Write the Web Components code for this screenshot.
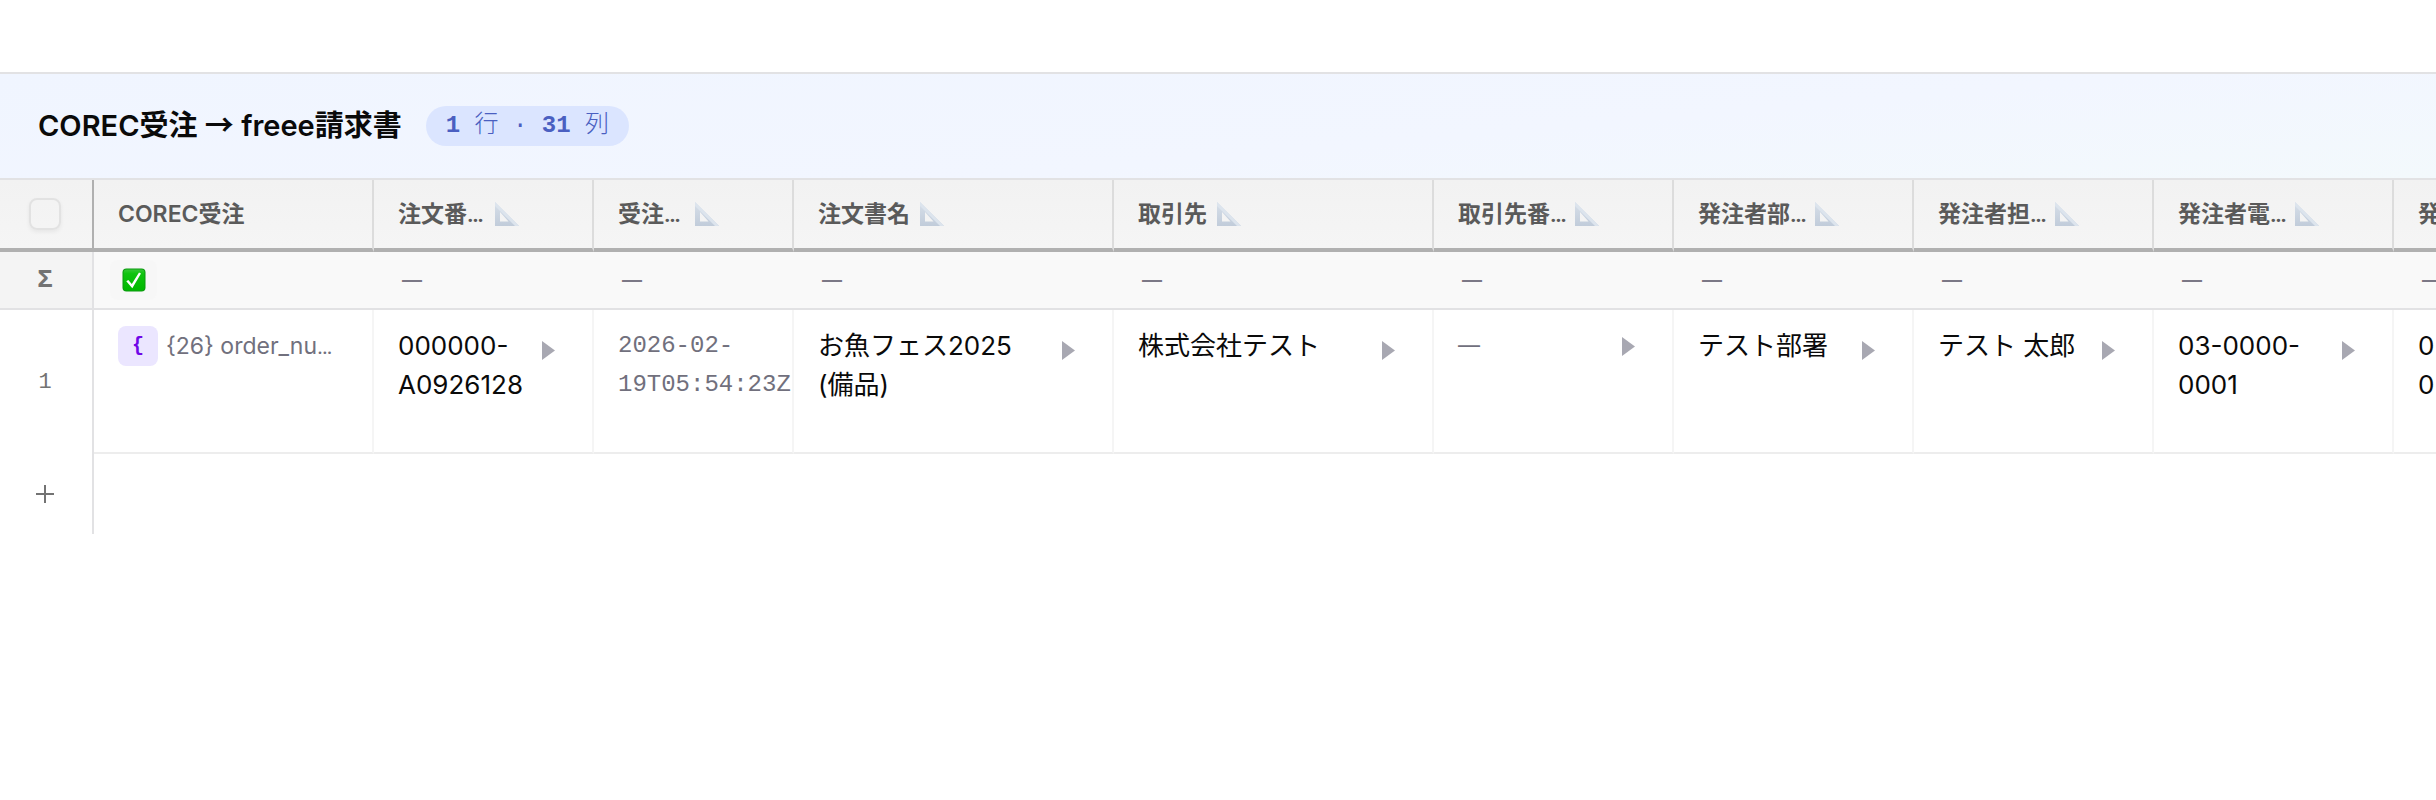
<!DOCTYPE html>
<html lang="ja">
<head>
<meta charset="UTF-8">
<meta name="viewport" content="width=device-width, initial-scale=1">
<title>COREC受注 → freee請求書</title>
<style>
  :root {
    --sans: Inter, 'Noto Sans CJK JP', sans-serif;
    --mono: 'Liberation Mono', 'Noto Sans CJK JP', monospace;
    --text: #0a0a0a;
    --muted: #71707d;
    --line: #e2e2e4;
    --line-strong: #b0b0b0;
  }
  body {
    margin: 0;
    background: #fff;
    color: var(--text);
    font-family: var(--sans);
    font-size: 26px;
    line-height: 39px;
    overflow-x: hidden;
  }
  .arrow {
    font-family: 'Noto Sans CJK JP', sans-serif;
    line-height: 1;
  }
  count-badge b { font-weight: 700; }
</style>
</head>
<body>
<sheet-page>
  <sheet-header>
    COREC受注 <span class="arrow">→</span> freee請求書
    <count-badge slot="badge"><b>1</b> 行 · <b>31</b> 列</count-badge>
  </sheet-header>
  <data-sheet></data-sheet>
</sheet-page>

<script>
// 共通: open な shadow root に markup を流し込む
class BaseElement extends HTMLElement {
  constructor() {
    super();
    this.attachShadow({ mode: 'open' });
  }

  connectedCallback() {
    this.shadowRoot.innerHTML = `<style>${this.styles}</style>${this.markup}`;
  }
}

class SheetPage extends BaseElement {
  get styles() {
    return `
      :host { display: block; padding-top: 72px; }
    `;
  }

  get markup() {
    return `<slot></slot>`;
  }
}

class SheetHeader extends BaseElement {
  get styles() {
    return `
      :host {
        display: flex;
        align-items: center;
        gap: 24px;
        padding: 32px 38px;
        border-top: 2px solid var(--line);
        border-bottom: 2px solid var(--line);
        background: linear-gradient(175deg, #f0f5ff 0%, #f2f6ff 60%, #f3f9fc 100%);
      }
      h2 {
        margin: 0;
        font-size: 29px;
        line-height: 40px;
        font-weight: 600;
        white-space: nowrap;
      }
    `;
  }

  get markup() {
    return `<h2><slot></slot></h2><slot name="badge"></slot>`;
  }
}

class CountBadge extends BaseElement {
  get styles() {
    return `
      :host {
        display: block;
        padding: 0 20px;
        border-radius: 20px;
        background: #dbe5ff;
        color: #4a5fc1;
        font-family: var(--mono);
        font-size: 24px;
        line-height: 40px;
        font-weight: 300;
        white-space: nowrap;
      }
    `;
  }

  get markup() {
    return `<slot></slot>`;
  }
}

// 列見出し (三角定規アイコン付き)
class ColumnHead extends BaseElement {
  get styles() {
    return `
      :host { display: flex; align-items: center; gap: 10px; }
      .label { white-space: nowrap; }
      :host([cut]) .label { flex: 1; min-width: 0; }
      :host([cut]) { padding-right: 49px; }
      svg { display: block; flex: none; width: 24px; height: 24px; }
    `;
  }

  get markup() {
    const icon = this.hasAttribute('plain') ? '' : `
      <svg viewBox="0 0 24 24" aria-hidden="true">
        <defs>
          <linearGradient id="ruler" x1="0" y1="0" x2="0" y2="1">
            <stop offset="0" stop-color="#d7dfe9"/>
            <stop offset="1" stop-color="#c1ccda"/>
          </linearGradient>
        </defs>
        <path fill="url(#ruler)" fill-rule="evenodd" d="M0 0L24 24H0zM5 10V19.500H13.500z"/>
        <path fill="#dce4ed" d="M0 0L24 24H20L0 4z"/>
      </svg>`;
    return `<span class="label"><slot></slot></span>${icon}`;
  }
}

// 値セル: テキスト + 展開ボタン
class ValueCell extends BaseElement {
  get styles() {
    return `
      :host { display: flex; align-items: flex-start; }
      .text { flex: 1; min-width: 0; overflow-wrap: break-word; }
      :host([empty]) .text { color: var(--muted); font-size: 22px; }
      :host([date]) .text {
        color: var(--muted);
        font-family: var(--mono);
        font-size: 24px;
        overflow-wrap: normal;
      }
      button {
        flex: none;
        display: flex;
        align-items: center;
        justify-content: center;
        width: 40px;
        height: 40px;
        margin: 4px 0 0;
        padding: 0;
        border: 0;
        background: none;
        cursor: pointer;
      }
      :host([empty]) button { margin-top: 0; }
      svg { display: block; width: 13px; height: 19px; fill: #a8a8b2; }
    `;
  }

  get markup() {
    const button = this.hasAttribute('date') ? '' : `
      <button type="button" aria-label="展開">
        <svg viewBox="0 0 13 19"><path d="M0 0L13 9.500L0 19z"/></svg>
      </button>`;
    return `<div class="text"><slot></slot></div>${button}`;
  }
}

// JSON オブジェクトの要約
class JsonCell extends BaseElement {
  get styles() {
    return `
      :host {
        display: flex;
        align-items: center;
        gap: 8px;
        color: var(--muted);
        font-size: 23px;
        white-space: nowrap;
      }
      .chip {
        flex: none;
        width: 40px;
        border-radius: 8px;
        background: #ebe6ff;
        color: #7008e7;
        font-family: var(--mono);
        font-size: 20px;
        font-weight: 700;
        line-height: 40px;
        text-align: center;
      }
    `;
  }

  get markup() {
    return `<span class="chip">{</span><span><slot></slot></span>`;
  }
}

class CheckMark extends BaseElement {
  get styles() {
    return `
      :host {
        display: flex;
        align-items: center;
        justify-content: center;
        width: 47px;
        height: 40px;
        border-radius: 8px;
        background: #f7f7f7;
      }
      svg { display: block; width: 24px; height: 24px; }
    `;
  }

  get markup() {
    return `
      <svg viewBox="0 0 24 24" role="img" aria-label="完了">
        <defs>
          <linearGradient id="green" x1="0" y1="0" x2="0" y2="1">
            <stop offset="0" stop-color="#35c835"/>
            <stop offset="0.200" stop-color="#0fc40f"/>
            <stop offset="1" stop-color="#00b800"/>
          </linearGradient>
        </defs>
        <rect x="0.500" y="0.500" width="23" height="23" rx="4" fill="#0a9a0e"/>
        <rect x="1.500" y="1.500" width="21" height="21" rx="3" fill="url(#green)"/>
        <path d="M4.300 13.300L6.300 11.900L9.800 16L17 4.600L19 5.600L10.300 20.200z" fill="#fff"/>
      </svg>`;
  }
}

const COLUMNS = [
  { width: 280, label: 'COREC受注', plain: true, cell: '<json-cell>{26} order_nu…</json-cell>' },
  { width: 220, label: '注文番…', cut: true, cell: '<value-cell>000000-A0926128</value-cell>' },
  { width: 200, label: '受注…', cut: true, cell: '<value-cell date>2026-02-19T05:54:23Z</value-cell>' },
  { width: 320, label: '注文書名', cell: '<value-cell>お魚フェス2025<br>(備品)</value-cell>' },
  { width: 320, label: '取引先', cell: '<value-cell>株式会社テスト</value-cell>' },
  { width: 240, label: '取引先番…', cut: true, cell: '<value-cell empty>—</value-cell>' },
  { width: 240, label: '発注者部…', cut: true, cell: '<value-cell>テスト部署</value-cell>' },
  { width: 240, label: '発注者担…', cut: true, cell: '<value-cell>テスト 太郎</value-cell>' },
  { width: 240, label: '発注者電…', cut: true, cell: '<value-cell>03-0000-0001</value-cell>' },
  { width: 240, label: '発', cut: true, cell: '<value-cell>0<br>0</value-cell>' },
];

// 省略記号だけ幅の狭い書体にする
const shorten = html => html.replace('…', '<span class="dots">…</span>');

class DataSheet extends BaseElement {
  get styles() {
    return `
      :host { display: block; overflow: hidden; }
      table {
        width: 100%;
        table-layout: fixed;
        border-collapse: separate;
        border-spacing: 0;
      }
      th, td {
        box-sizing: border-box;
        padding: 0 24px;
        text-align: left;
        font-weight: 400;
      }
      .dots { font-family: Roboto, sans-serif; line-height: 1; }
      .gutter {
        padding: 0 2px 0 0;
        border-right: 2px solid var(--line);
        text-align: center;
        color: #737373;
        font-family: var(--mono);
        font-size: 22px;
      }

      thead th {
        height: 72px;
        border-right: 2px solid #dcdcdc;
        border-bottom: 4px solid var(--line-strong);
        background: linear-gradient(#f2f2f2, #f5f5f5);
        color: #5a5a5a;
        font-size: 23px;
        font-weight: 600;
      }
      thead .gutter { border-right-color: var(--line-strong); }
      input {
        appearance: none;
        display: block;
        box-sizing: border-box;
        width: 32px;
        height: 32px;
        margin: 0 auto;
        border: 2px solid #e2e2e2;
        border-radius: 8px;
        box-shadow: 0 2px 4px rgba(0,0,0,0.06);
      }

      .summary > * {
        height: 58px;
        border-bottom: 2px solid var(--line);
        background: #f9f9f9;
      }
      .summary td { padding: 0 16px; }
      .summary .gutter { background: #f4f4f4; font-size: 26px; font-weight: 700; }
      .summary span {
        display: block;
        padding-left: 12px;
        color: #7b7886;
        font-size: 20px;
        font-weight: 600;
      }

      .record > td {
        height: 144px;
        padding-top: 16px;
        border-right: 2px solid #f5f5f5;
        border-bottom: 2px solid #ededed;
        vertical-align: top;
      }
      .add > * { height: 80px; }
      button {
        display: flex;
        align-items: center;
        justify-content: center;
        width: 100%;
        height: 100%;
        padding: 0;
        border: 0;
        background: none;
        cursor: pointer;
      }
      button svg { width: 18px; height: 18px; stroke: #737373; stroke-width: 2; }
    `;
  }

  get markup() {
    const cols = COLUMNS.map(c => `<col style="width:${c.width}px">`).join('');
    const heads = COLUMNS.map(c => `
      <th scope="col"><column-head ${c.plain ? 'plain' : ''} ${c.cut ? 'cut' : ''}>${shorten(c.label)}</column-head></th>
    `).join('');
    const sums = COLUMNS.map((c, i) => `<td>${i === 0 ? '<check-mark></check-mark>' : '<span>—</span>'}</td>`).join('');
    const cells = COLUMNS.map(c => `<td>${shorten(c.cell)}</td>`).join('');

    return `
      <table>
        <colgroup><col style="width:94px">${cols}</colgroup>
        <thead>
          <tr>
            <th class="gutter"><input type="checkbox" aria-label="すべて選択"></th>
            ${heads}
          </tr>
        </thead>
        <tbody>
          <tr class="summary"><th class="gutter" scope="row">Σ</th>${sums}</tr>
          <tr class="record"><th class="gutter" scope="row">1</th>${cells}</tr>
          <tr class="add">
            <th class="gutter">
              <button type="button" aria-label="行を追加">
                <svg viewBox="0 0 18 18"><path d="M9 0V18M0 9H18"/></svg>
              </button>
            </th>
            <td colspan="${COLUMNS.length}"></td>
          </tr>
        </tbody>
      </table>`;
  }
}

customElements.define('count-badge', CountBadge);
customElements.define('sheet-header', SheetHeader);
customElements.define('column-head', ColumnHead);
customElements.define('value-cell', ValueCell);
customElements.define('json-cell', JsonCell);
customElements.define('check-mark', CheckMark);
customElements.define('data-sheet', DataSheet);
customElements.define('sheet-page', SheetPage);
</script>
</body>
</html>
